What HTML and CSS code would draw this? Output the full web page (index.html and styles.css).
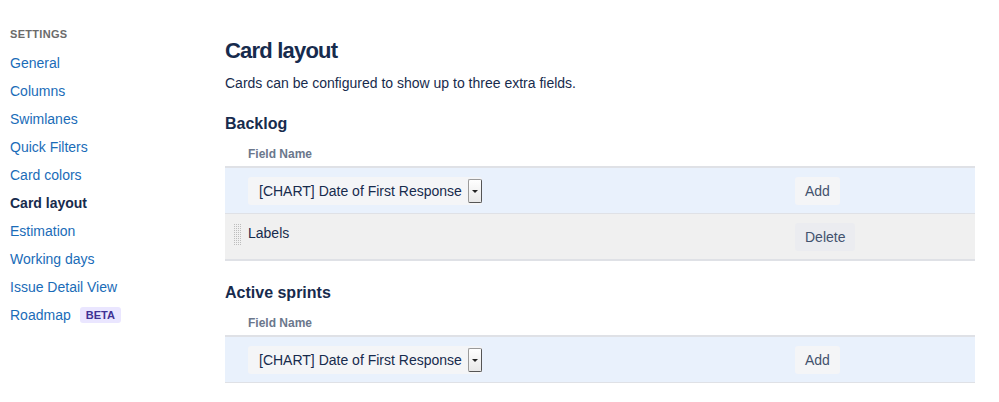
FILE: index.html
```html
<!DOCTYPE html>
<html>
<head>
<meta charset="utf-8">
<link rel="stylesheet" href="styles.css">
</head>
<body>
<div class="page">
  <nav class="sidebar">
    <div class="nav-title">SETTINGS</div>
    <a class="nav-link" href="#">General</a>
    <a class="nav-link" href="#">Columns</a>
    <a class="nav-link" href="#">Swimlanes</a>
    <a class="nav-link" href="#">Quick Filters</a>
    <a class="nav-link" href="#">Card colors</a>
    <a class="nav-link active" href="#">Card layout</a>
    <a class="nav-link" href="#">Estimation</a>
    <a class="nav-link" href="#">Working days</a>
    <a class="nav-link" href="#">Issue Detail View</a>
    <a class="nav-link" href="#">Roadmap <span class="badge">BETA</span></a>
  </nav>
  <main class="content">
    <h1 class="title">Card layout</h1>
    <p class="desc">Cards can be configured to show up to three extra fields.</p>

    <h2 class="section">Backlog</h2>
    <div class="col-head">Field Name</div>
    <div class="table">
      <div class="row add-row">
        <div class="field">
          <div class="select"><span class="select-text">[CHART] Date of First Response</span><span class="select-arrow"></span></div>
        </div>
        <div class="action"><button class="btn">Add</button></div>
      </div>
      <div class="row item-row">
        <div class="field"><span class="grip"></span><span class="label">Labels</span></div>
        <div class="action"><button class="btn btn-del">Delete</button></div>
      </div>
    </div>

    <h2 class="section">Active sprints</h2>
    <div class="col-head">Field Name</div>
    <div class="table">
      <div class="row add-row">
        <div class="field">
          <div class="select"><span class="select-text">[CHART] Date of First Response</span><span class="select-arrow"></span></div>
        </div>
        <div class="action"><button class="btn">Add</button></div>
      </div>
    </div>
  </main>
</div>
</body>
</html>
```
FILE: styles.css
```css
* { box-sizing: border-box; }
html, body { margin: 0; padding: 0; background: #fff; }
body {
  font-family: "Liberation Sans", Arial, sans-serif;
  color: #172b4d;
  font-size: 14px;
}
.page {
  display: flex;
  padding-top: 27px;
}
.sidebar {
  width: 225px;
  padding-left: 10px;
  display: flex;
  flex-direction: column;
}
.nav-title {
  font-size: 11px;
  font-weight: 700;
  color: #6b6b6b;
  letter-spacing: 0.3px;
  height: 14px;
  line-height: 14px;
  margin-bottom: 13px;
}
.nav-link {
  font-size: 14px;
  color: #1a6cb8;
  text-decoration: none;
  height: 28px;
  line-height: 18px;
  display: flex;
  align-items: flex-start;
}
.nav-link.active {
  color: #172b4d;
  font-weight: 700;
}
.badge {
  display: inline-block;
  margin-left: 9px;
  margin-top: 1px;
  background: #eae6ff;
  color: #403294;
  font-size: 11px;
  font-weight: 700;
  padding: 0 6px;
  height: 16px;
  line-height: 16px;
  border-radius: 3px;
}
.content {
  width: 750px;
}
.title {
  font-size: 22px;
  font-weight: 700;
  margin: 10px 0 0;
  line-height: 28px;
  letter-spacing: -0.8px;
}
.desc {
  margin: 9px 0 0;
  line-height: 18px;
}
.section {
  font-size: 16px;
  font-weight: 700;
  margin: 22px 0 0;
  line-height: 20px;
}
.col-head {
  font-size: 12px;
  font-weight: 700;
  color: #6b778c;
  padding-left: 23px;
  margin-top: 12px;
  line-height: 16px;
  height: 20px;
}
.table {
  border-top: 2px solid #dfe1e6;
}
.row {
  display: flex;
  align-items: center;
  border-bottom: 2px solid #dfe1e6;
}
.add-row { background: #e9f1fc; height: 46px; border-bottom-width: 1px; }
.item-row { background: #f0f0f0; height: 47px; }
.field {
  flex: 1;
  display: flex;
  align-items: center;
  padding-left: 23px;
}
.item-row .field { padding-left: 8px; }
.select {
  display: flex;
  align-items: center;
  width: 234px;
  height: 28px;
  background: #f4f5f7;
  border-radius: 3px;
  padding-left: 11px;
  white-space: nowrap;
}
.select-text {
  flex: 1;
  color: #172b4d;
  font-size: 14px;
}
.select-arrow {
  flex: none;
  width: 14px;
  height: 24px;
  border: 1px solid #9a9a9a;
  border-right-color: #555;
  border-bottom-color: #555;
  border-radius: 2px;
  background: linear-gradient(#ffffff, #e8e8e8);
  position: relative;
}
.select-arrow::after {
  content: "";
  position: absolute;
  left: 3px;
  top: 10px;
  border-left: 3px solid transparent;
  border-right: 3px solid transparent;
  border-top: 3px solid #222;
}
.grip {
  flex: none;
  width: 8px;
  height: 22px;
  background: conic-gradient(#bdbdbd 25%, transparent 0) 0 0 / 2px 2px;
  margin-right: 7px;
  margin-top: -4px;
}
.label {
  color: #172b4d;
  margin-top: -8px;
}
.action {
  width: 180px;
}
.btn {
  font-family: inherit;
  font-size: 14px;
  color: #42526e;
  background: #f4f5f7;
  border: none;
  border-radius: 3px;
  height: 28px;
  padding: 0 10px;
  cursor: pointer;
}
.btn-del { background: #ebecf0; }
```
